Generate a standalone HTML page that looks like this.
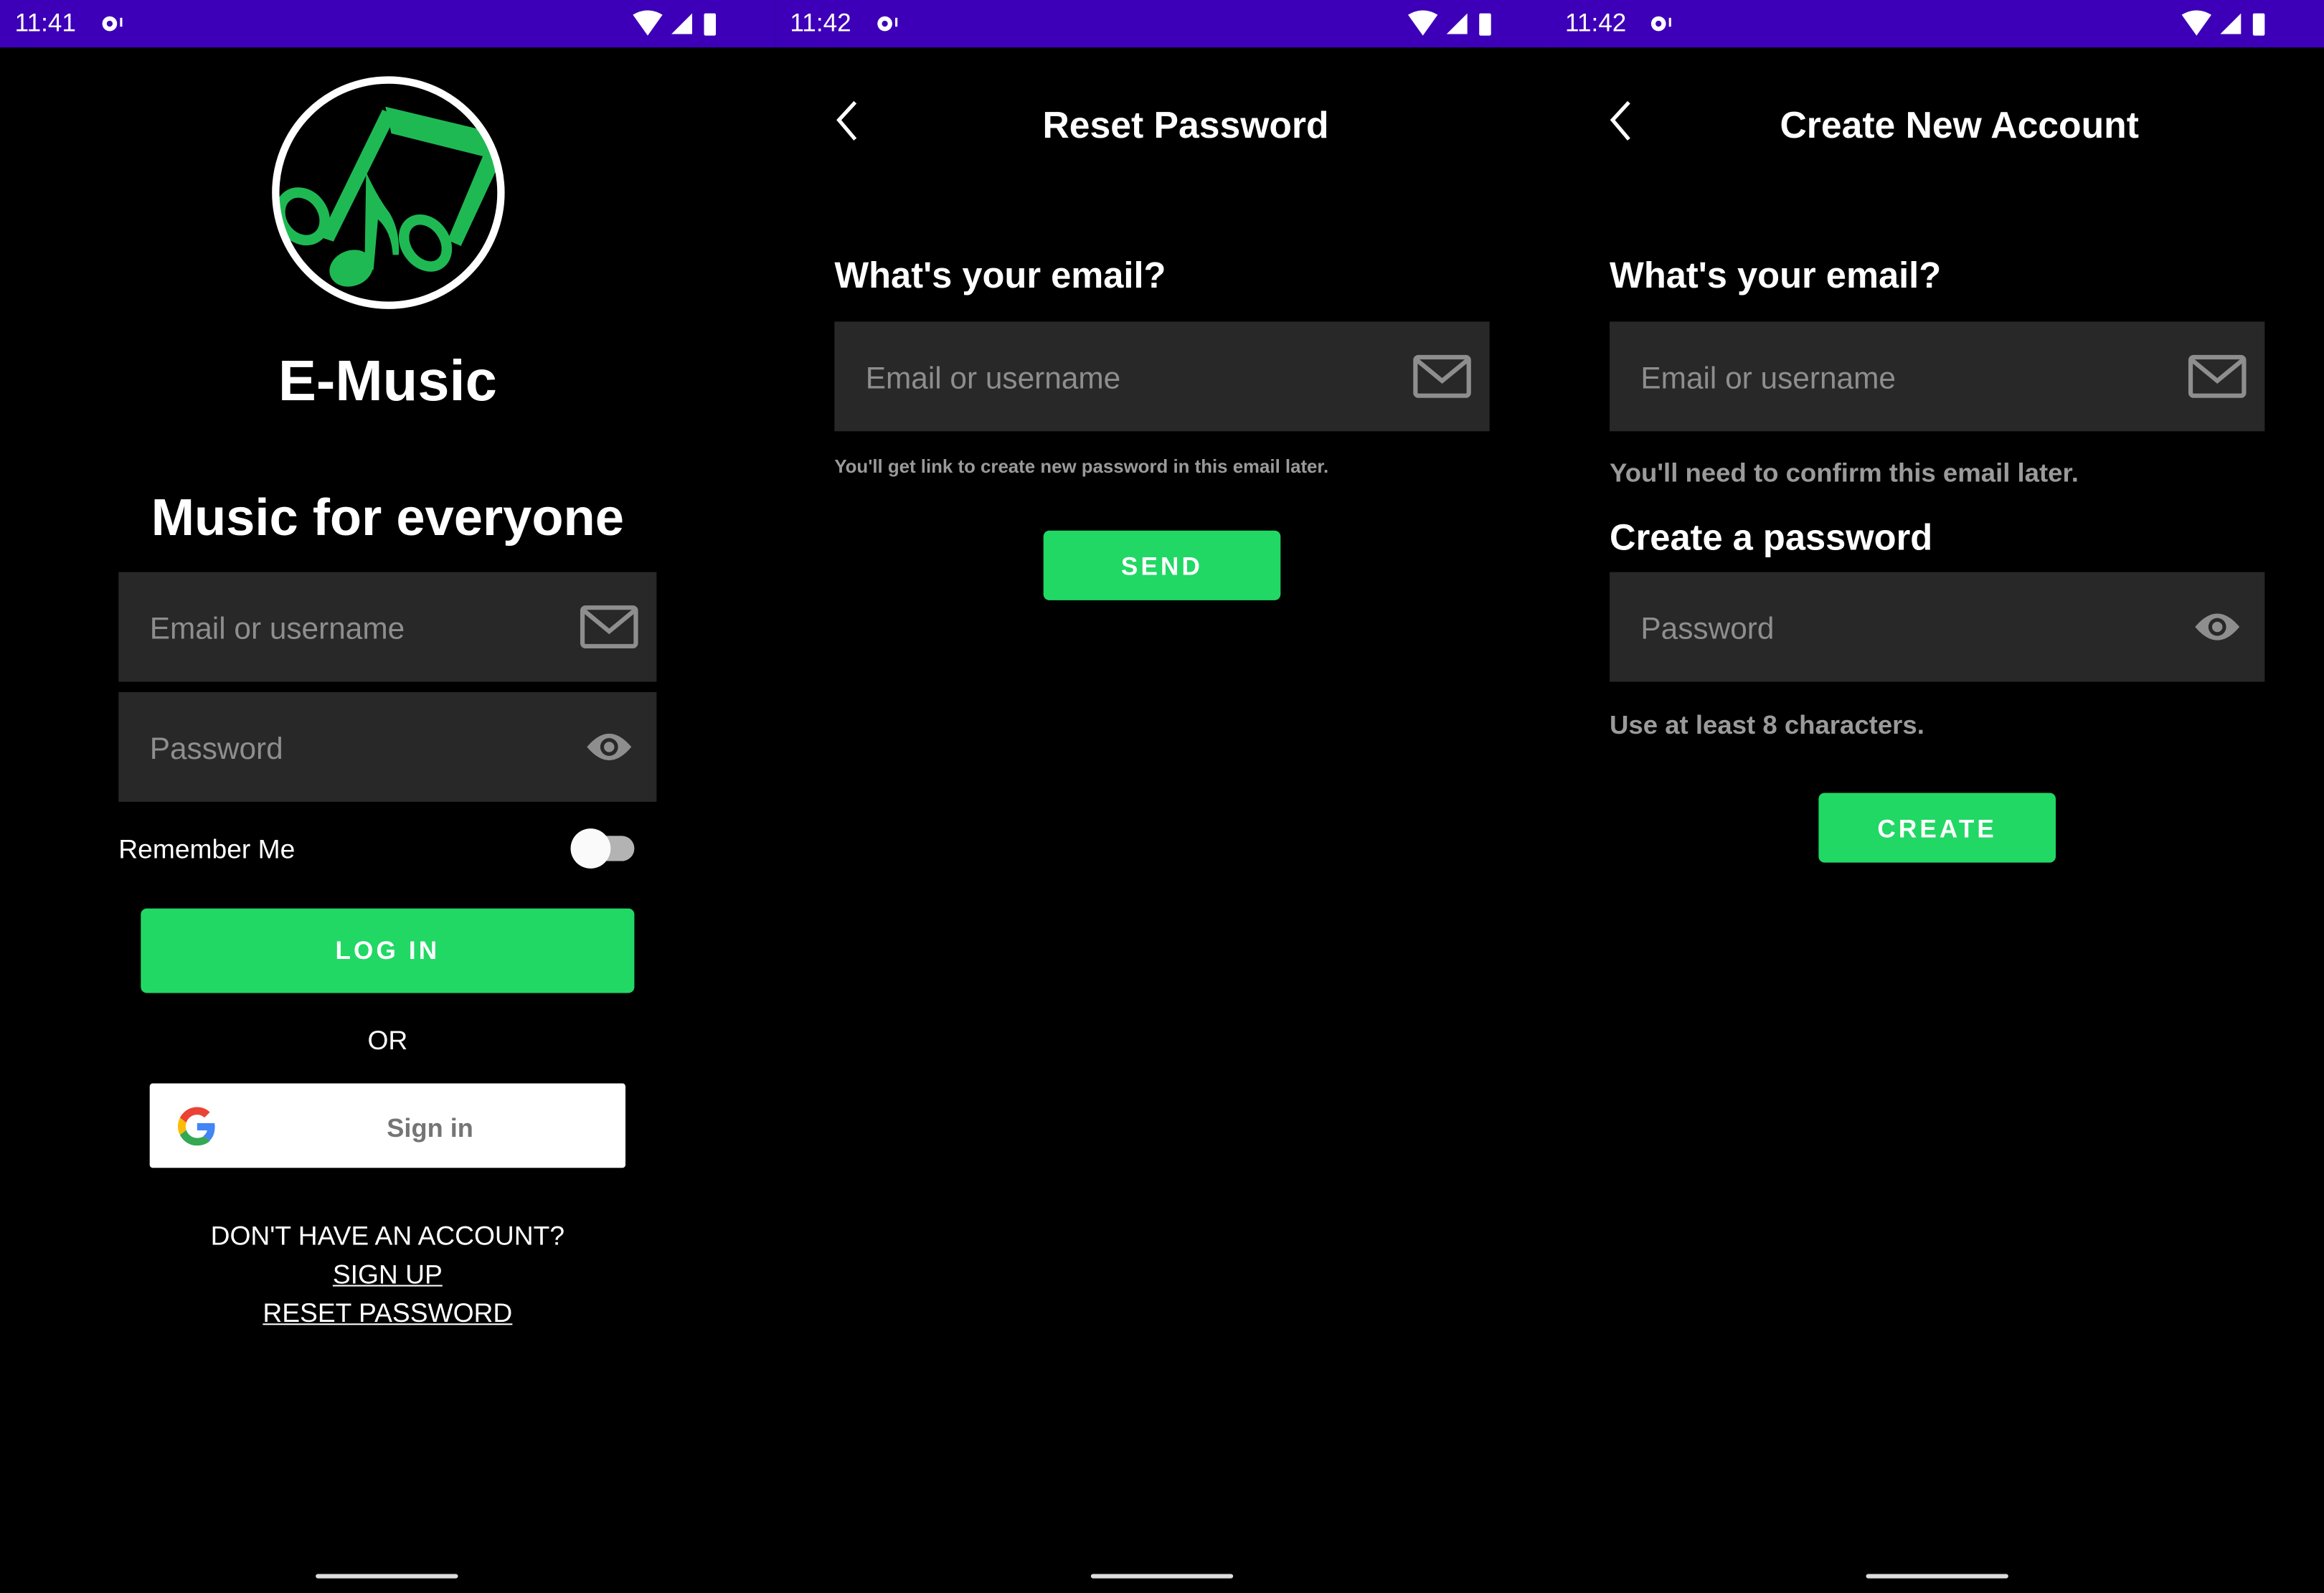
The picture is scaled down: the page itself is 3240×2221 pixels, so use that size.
<!DOCTYPE html>
<html><head><meta charset="utf-8"><style>
html,body{margin:0;padding:0;background:#000;overflow:hidden}
body{width:3240px;height:2220px}
#w{position:absolute;left:0;top:0;width:1568px;height:1075px;transform:scale(2.06633);transform-origin:0 0;font-family:"Liberation Sans",sans-serif;color:#fff}
.a{position:absolute}
.sb{top:0;height:32px;background:#3d00b8;width:523px}
.tm{font-size:17px;top:6px}
.fld{background:#282828;height:74px}
.ph{font-size:20.5px;color:#8e8e8e;top:27px;left:21px}
.btn{background:#21d865;border-radius:4px;color:#fff;font-size:17px;font-weight:bold;letter-spacing:2px;text-align:center}
.h{font-weight:bold}
.c{text-align:center}
.bar{height:3px;width:96px;background:#ddd;border-radius:2px;top:1062px}
.g{color:#9a9a9a;font-weight:bold}
</style></head><body><div id="w">
<div class="a sb" style="left:0"></div><div class="a sb" style="left:523px"></div><div class="a sb" style="left:1045px;width:523px"></div>
<div class="a tm" style="left:10px">11:41</div><div class="a tm" style="left:533px">11:42</div><div class="a tm" style="left:1056px">11:42</div>
<svg class="a" style="left:66px;top:9px" width="20" height="14"><circle cx="8" cy="7" r="5" fill="#fff"/><circle cx="8" cy="7" r="2" fill="#3d00b8"/><rect x="15" y="3" width="1.5" height="6" fill="#fff"/></svg>
<svg class="a" style="left:589px;top:9px" width="20" height="14"><circle cx="8" cy="7" r="5" fill="#fff"/><circle cx="8" cy="7" r="2" fill="#3d00b8"/><rect x="15" y="3" width="1.5" height="6" fill="#fff"/></svg>
<svg class="a" style="left:1111px;top:9px" width="20" height="14"><circle cx="8" cy="7" r="5" fill="#fff"/><circle cx="8" cy="7" r="2" fill="#3d00b8"/><rect x="15" y="3" width="1.5" height="6" fill="#fff"/></svg>
<svg class="a" style="left:426px;top:7px" width="62" height="18"><path d="M1 3 Q11 -3 21 3 L11 17Z" fill="#fff"/><path d="M41 2 L41 16 L27 16Z" fill="#fff"/><rect x="49" y="2" width="8" height="15" rx="1" fill="#fff"/></svg>
<svg class="a" style="left:949px;top:7px" width="62" height="18"><path d="M1 3 Q11 -3 21 3 L11 17Z" fill="#fff"/><path d="M41 2 L41 16 L27 16Z" fill="#fff"/><rect x="49" y="2" width="8" height="15" rx="1" fill="#fff"/></svg>
<svg class="a" style="left:1471px;top:7px" width="62" height="18"><path d="M1 3 Q11 -3 21 3 L11 17Z" fill="#fff"/><path d="M41 2 L41 16 L27 16Z" fill="#fff"/><rect x="49" y="2" width="8" height="15" rx="1" fill="#fff"/></svg>

<svg class="a" style="left:182px;top:50px" width="160" height="160" viewBox="0 0 160 160">
<defs><clipPath id="cp"><circle cx="80" cy="80" r="76"/></clipPath></defs>
<g clip-path="url(#cp)" fill="#1fb954">
<path d="M78 22 L145 38 L154 58 L82 40Z"/>
<path d="M146 50 L156 58 L129 116 L120 112Z"/>
<path d="M76 24 L85 28 L43 113 L34 110Z"/>
<ellipse cx="22" cy="96" rx="14" ry="17" fill="none" stroke="#1fb954" stroke-width="7" transform="rotate(-35 22 96)"/>
<ellipse cx="105" cy="114" rx="13" ry="17" fill="none" stroke="#1fb954" stroke-width="7" transform="rotate(-35 105 114)"/>
<ellipse cx="55" cy="131" rx="15" ry="12" transform="rotate(-20 55 131)"/>
<path d="M65 66 Q72 82 81 94 Q88 106 87 122 L83 122 Q82 106 73 98 L70 132 L64 132Z"/>
</g>
<circle cx="80" cy="80" r="76" fill="none" stroke="#fff" stroke-width="5"/>
</svg>
<div class="a h c" style="left:0;width:523px;top:236px;font-size:38.5px">E-Music</div>
<div class="a h c" style="left:0;width:523px;top:330px;font-size:35px">Music for everyone</div>
<div class="a fld" style="left:80px;top:386px;width:363px"><div class="a ph">Email or username</div>
<svg class="a" style="left:311px;top:22px" width="40" height="30"><rect x="2" y="2" width="36" height="26" rx="2" fill="none" stroke="#8e8e8e" stroke-width="3"/><path d="M3 4 L20 18 L37 4" fill="none" stroke="#8e8e8e" stroke-width="3"/></svg></div>
<div class="a fld" style="left:80px;top:467px;width:363px"><div class="a ph">Password</div>
<svg class="a" style="left:315px;top:25px" width="32" height="24"><path d="M1 12 Q16 -6 31 12 Q16 30 1 12Z" fill="#8e8e8e"/><circle cx="16" cy="12" r="6" fill="#282828"/><circle cx="16" cy="12" r="3.5" fill="#8e8e8e"/></svg></div>
<div class="a" style="left:80px;top:563px;font-size:18px">Remember Me</div>
<div class="a" style="left:390px;top:564px;width:38px;height:17px;border-radius:9px;background:#b3b3b3"></div>
<div class="a" style="left:385px;top:559px;width:27px;height:27px;border-radius:50%;background:#fafafa"></div>
<div class="a btn" style="left:95px;top:613px;width:333px;height:57px;line-height:58px">LOG IN</div>
<div class="a c" style="left:0;width:523px;top:692px;font-size:18px">OR</div>
<div class="a" style="left:101px;top:731px;width:321px;height:57px;background:#fff;border-radius:2px"></div>
<svg class="a" style="left:120px;top:747px" width="26" height="26" viewBox="0 0 48 48"><path fill="#EA4335" d="M24 9.5c3.5 0 6.6 1.2 9.1 3.6l6.8-6.8C35.8 2.4 30.3 0 24 0 14.6 0 6.6 5.4 2.6 13.3l7.9 6.1C12.4 13.7 17.7 9.5 24 9.5z"/><path fill="#4285F4" d="M46.1 24.5c0-1.6-.1-3.1-.4-4.5H24v9h12.4c-.5 2.9-2.2 5.3-4.6 6.9l7.7 6c4.5-4.2 6.6-10.3 6.6-17.4z"/><path fill="#FBBC05" d="M10.5 28.6c-.5-1.4-.8-3-.8-4.6s.3-3.2.8-4.6l-7.9-6.1C.9 16.6 0 20.2 0 24s.9 7.4 2.6 10.7l7.9-6.1z"/><path fill="#34A853" d="M24 48c6.5 0 11.9-2.1 15.9-5.8l-7.7-6c-2.1 1.4-4.9 2.3-8.2 2.3-6.3 0-11.6-4.2-13.5-9.9l-7.9 6.1C6.6 42.6 14.6 48 24 48z"/></svg>
<div class="a h" style="left:261px;top:751px;font-size:17.5px;color:#757575">Sign in</div>
<div class="a c" style="left:0;width:523px;top:821px;font-size:18px;line-height:26px">DON'T HAVE AN ACCOUNT?<br><u>SIGN UP</u><br><u>RESET PASSWORD</u></div>
<div class="a bar" style="left:213px"></div>

<svg class="a" style="left:562px;top:67px" width="20" height="30"><path d="M15 2 L4 14 L15 27" fill="none" stroke="#fff" stroke-width="2.5"/></svg>
<div class="a h c" style="left:600px;width:400px;top:71px;font-size:25px">Reset Password</div>
<div class="a h" style="left:563px;top:173px;font-size:24.5px">What's your email?</div>
<div class="a fld" style="left:563px;top:217px;width:442px"><div class="a ph">Email or username</div>
<svg class="a" style="left:390px;top:22px" width="40" height="30"><rect x="2" y="2" width="36" height="26" rx="2" fill="none" stroke="#8e8e8e" stroke-width="3"/><path d="M3 4 L20 18 L37 4" fill="none" stroke="#8e8e8e" stroke-width="3"/></svg></div>
<div class="a g" style="left:563px;top:308px;font-size:12.5px">You'll get link to create new password in this email later.</div>
<div class="a btn" style="left:704px;top:358px;width:160px;height:47px;line-height:49px">SEND</div>
<div class="a bar" style="left:736px"></div>

<svg class="a" style="left:1084px;top:67px" width="20" height="30"><path d="M15 2 L4 14 L15 27" fill="none" stroke="#fff" stroke-width="2.5"/></svg>
<div class="a h c" style="left:1122px;width:400px;top:71px;font-size:25px">Create New Account</div>
<div class="a h" style="left:1086px;top:173px;font-size:24.5px">What's your email?</div>
<div class="a fld" style="left:1086px;top:217px;width:442px"><div class="a ph">Email or username</div>
<svg class="a" style="left:390px;top:22px" width="40" height="30"><rect x="2" y="2" width="36" height="26" rx="2" fill="none" stroke="#8e8e8e" stroke-width="3"/><path d="M3 4 L20 18 L37 4" fill="none" stroke="#8e8e8e" stroke-width="3"/></svg></div>
<div class="a g" style="left:1086px;top:309px;font-size:17.7px">You'll need to confirm this email later.</div>
<div class="a h" style="left:1086px;top:350px;font-size:24.5px">Create a password</div>
<div class="a fld" style="left:1086px;top:386px;width:442px"><div class="a ph">Password</div>
<svg class="a" style="left:394px;top:25px" width="32" height="24"><path d="M1 12 Q16 -6 31 12 Q16 30 1 12Z" fill="#8e8e8e"/><circle cx="16" cy="12" r="6" fill="#282828"/><circle cx="16" cy="12" r="3.5" fill="#8e8e8e"/></svg></div>
<div class="a g" style="left:1086px;top:479px;font-size:17.7px">Use at least 8 characters.</div>
<div class="a btn" style="left:1227px;top:535px;width:160px;height:47px;line-height:49px">CREATE</div>
<div class="a bar" style="left:1259px"></div>
</div></body></html>
